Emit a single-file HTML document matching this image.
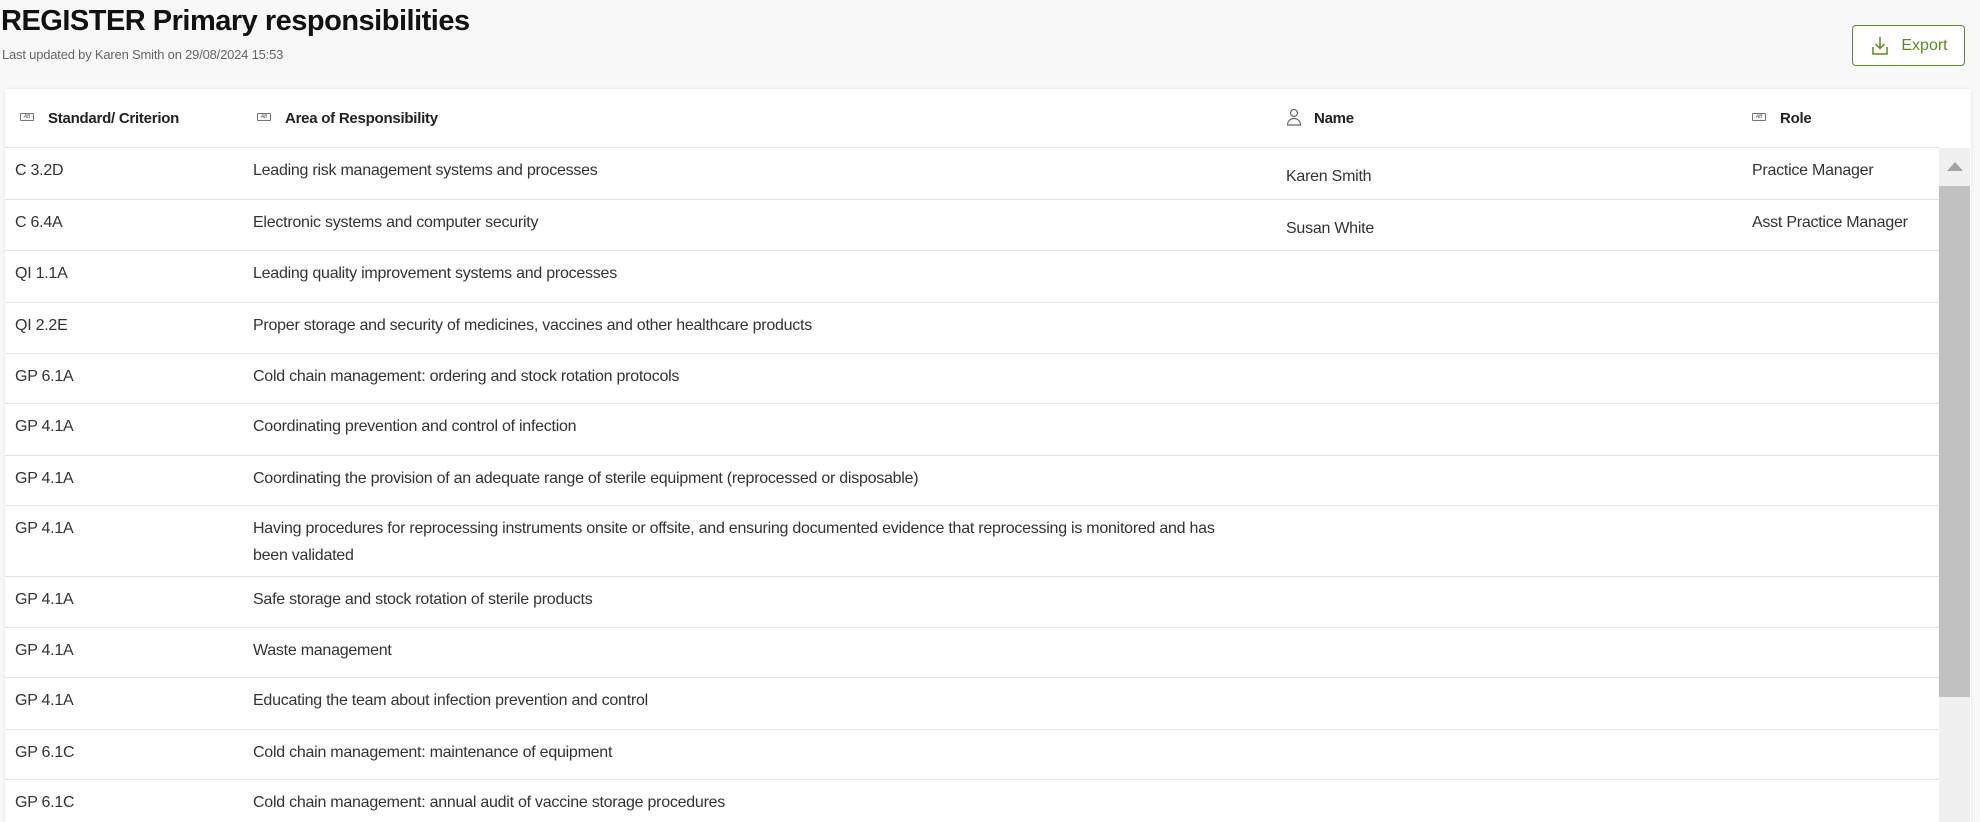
<!DOCTYPE html>
<html><head><meta charset="utf-8"><style>
*{box-sizing:border-box;margin:0;padding:0}
html,body{width:1980px;height:822px;overflow:hidden}
body{background:#f8f8f8;font-family:"Liberation Sans",sans-serif;color:#333;position:relative}
h1{position:absolute;left:1px;top:5px;font-size:29px;font-weight:bold;letter-spacing:-0.5px;color:#111}
.sub{position:absolute;left:2px;top:47px;font-size:13px;color:#666;letter-spacing:-0.2px}
.btn{position:absolute;left:1852px;top:25px;width:113px;height:41px;border:1.5px solid #5b8c22;border-radius:4px;background:#fff;color:#5b8c22;font-size:16px;display:flex;align-items:center;justify-content:center;gap:10px}
.card{position:absolute;left:5px;top:89px;width:1966px;height:740px;background:#fff;box-shadow:0 0 4px rgba(0,0,0,.08)}
.row{position:absolute;left:0;width:1934px;border-bottom:1.5px solid #e4e4e4;font-size:16px;letter-spacing:-0.25px}
.row span{position:absolute;top:14px}
.c1{left:10px}.c2{left:248px;width:1000px;line-height:27px;top:9px!important}.c3{left:1281px;top:20px!important}.c4{left:1747px}
.hd{font-weight:bold;font-size:15px;color:#222}
.hd span{top:21px}
.ic{display:inline-block;width:14px;height:8px;border:1px solid #777;border-radius:1px;font-size:5px;line-height:6px;text-align:center;color:#555;vertical-align:middle;margin-right:14px;font-weight:normal;position:relative;top:-2px}
.sb{position:absolute;left:1939px;top:148px;width:31px;height:700px;background:#f0f0f0}
.th{position:absolute;left:1939px;top:186px;width:31px;height:511px;background:#c1c1c1}
.ar{position:absolute;left:1947px;top:162px;width:0;height:0;border-left:8px solid transparent;border-right:8px solid transparent;border-bottom:9px solid #a3a3a3}
</style></head><body>
<h1>REGISTER Primary responsibilities</h1>
<div class="sub">Last updated by Karen Smith on 29/08/2024 15:53</div>
<div class="btn"><svg width="22" height="22" viewBox="0 0 22 22" fill="none" stroke="#5b8c22" stroke-width="1.5"><path d="M11 2v11M6.5 9l4.5 4.5L15.5 9M4 12v7h14v-7"/></svg>Export</div>
<div class="card"></div>
<div class="row hd" style="top:89px;height:59px;left:5px"><span style="left:15px"><i class="ic">AB</i>Standard/ Criterion</span><span style="left:252px"><i class="ic">AB</i>Area of Responsibility</span><span style="left:1281px"><svg width="16" height="18" viewBox="0 0 16 18" fill="none" stroke="#666" stroke-width="1.2" style="vertical-align:middle;margin-right:12px;position:relative;top:-2px"><circle cx="8" cy="5" r="3.5"/><path d="M1.5 17c0-4 3-6.5 6.5-6.5s6.5 2.5 6.5 6.5z"/></svg>Name</span><span style="left:1747px"><i class="ic">AB</i>Role</span></div>
<div class="row" style="top:148px;height:52px;left:5px"><span class="c1">C 3.2D</span><span class="c2">Leading risk management systems and processes</span><span class="c3">Karen Smith</span><span class="c4">Practice Manager</span></div>
<div class="row" style="top:200px;height:51px;left:5px"><span class="c1">C 6.4A</span><span class="c2">Electronic systems and computer security</span><span class="c3">Susan White</span><span class="c4">Asst Practice Manager</span></div>
<div class="row" style="top:251px;height:52px;left:5px"><span class="c1">QI 1.1A</span><span class="c2">Leading quality improvement systems and processes</span></div>
<div class="row" style="top:303px;height:51px;left:5px"><span class="c1">QI 2.2E</span><span class="c2">Proper storage and security of medicines, vaccines and other healthcare products</span></div>
<div class="row" style="top:354px;height:50px;left:5px"><span class="c1">GP 6.1A</span><span class="c2">Cold chain management: ordering and stock rotation protocols</span></div>
<div class="row" style="top:404px;height:52px;left:5px"><span class="c1">GP 4.1A</span><span class="c2">Coordinating prevention and control of infection</span></div>
<div class="row" style="top:456px;height:50px;left:5px"><span class="c1">GP 4.1A</span><span class="c2">Coordinating the provision of an adequate range of sterile equipment (reprocessed or disposable)</span></div>
<div class="row" style="top:506px;height:71px;left:5px"><span class="c1">GP 4.1A</span><span class="c2" style="width:990px">Having procedures for reprocessing instruments onsite or offsite, and ensuring documented evidence that reprocessing is monitored and has been validated</span></div>
<div class="row" style="top:577px;height:51px;left:5px"><span class="c1">GP 4.1A</span><span class="c2">Safe storage and stock rotation of sterile products</span></div>
<div class="row" style="top:628px;height:50px;left:5px"><span class="c1">GP 4.1A</span><span class="c2">Waste management</span></div>
<div class="row" style="top:678px;height:52px;left:5px"><span class="c1">GP 4.1A</span><span class="c2">Educating the team about infection prevention and control</span></div>
<div class="row" style="top:730px;height:50px;left:5px"><span class="c1">GP 6.1C</span><span class="c2">Cold chain management: maintenance of equipment</span></div>
<div class="row" style="top:780px;height:52px;left:5px"><span class="c1">GP 6.1C</span><span class="c2">Cold chain management: annual audit of vaccine storage procedures</span></div>
<div class="sb"></div><div class="th"></div><div class="ar"></div>
</body></html>
